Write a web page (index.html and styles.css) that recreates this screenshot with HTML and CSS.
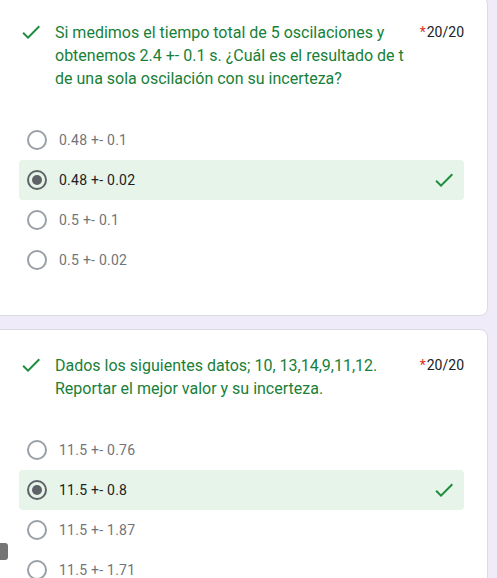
FILE: index.html
```html
<!DOCTYPE html>
<html lang="es">
<head>
<meta charset="utf-8">
<title>Cuestionario</title>
<link rel="stylesheet" href="styles.css">
</head>
<body>
<main class="page">
  <section class="card card-first">
    <div class="q-head">
      <svg class="q-check" viewBox="0 0 24 24" width="24" height="24"><path d="M9 16.17L4.83 12l-1.42 1.41L9 19 21 7l-1.41-1.41z"/></svg>
      <div class="q-title">Si medimos el tiempo total de 5 oscilaciones y obtenemos 2.4 +- 0.1 s. ¿Cuál es el resultado de t de una sola oscilación con su incerteza?</div>
      <div class="q-score"><span class="req">*</span>20/20</div>
    </div>
    <div class="options">
      <div class="opt"><span class="radio"></span><span class="opt-text">0.48 +- 0.1</span></div>
      <div class="opt opt-correct"><span class="radio radio-on"></span><span class="opt-text">0.48 +- 0.02</span>
        <svg class="opt-check" viewBox="0 0 24 24" width="24" height="24"><path d="M9 16.17L4.83 12l-1.42 1.41L9 19 21 7l-1.41-1.41z"/></svg></div>
      <div class="opt"><span class="radio"></span><span class="opt-text">0.5 +- 0.1</span></div>
      <div class="opt"><span class="radio"></span><span class="opt-text">0.5 +- 0.02</span></div>
    </div>
  </section>
  <section class="card">
    <div class="q-head">
      <svg class="q-check" viewBox="0 0 24 24" width="24" height="24"><path d="M9 16.17L4.83 12l-1.42 1.41L9 19 21 7l-1.41-1.41z"/></svg>
      <div class="q-title">Dados los siguientes datos; 10, 13,14,9,11,12. Reportar el mejor valor y su incerteza.</div>
      <div class="q-score"><span class="req">*</span>20/20</div>
    </div>
    <div class="options">
      <div class="opt"><span class="radio"></span><span class="opt-text">11.5 +- 0.76</span></div>
      <div class="opt opt-correct"><span class="radio radio-on"></span><span class="opt-text">11.5 +- 0.8</span>
        <svg class="opt-check" viewBox="0 0 24 24" width="24" height="24"><path d="M9 16.17L4.83 12l-1.42 1.41L9 19 21 7l-1.41-1.41z"/></svg></div>
      <div class="opt"><span class="radio"></span><span class="opt-text">11.5 +- 1.87</span></div>
      <div class="opt"><span class="radio"></span><span class="opt-text">11.5 +- 1.71</span></div>
    </div>
  </section>
</main>
<div class="side-tab"></div>
</body>
</html>
```
FILE: styles.css
```css
html, body {
  margin: 0;
  padding: 0;
  background: #f0ebf8;
  font-family: Roboto, "Liberation Sans", Arial, sans-serif;
  overflow: hidden;
}
.page {
  display: flex;
  flex-direction: column;
  gap: 13px;
}
.card {
  background: #fff;
  border: 1px solid #dadce0;
  border-radius: 8px;
  margin: 0 9px 0 -10px;
  padding: 24px 23px 35px 28px;
}
.card-first {
  margin-top: -4px;
}
.q-head {
  display: flex;
  align-items: flex-start;
}
.q-check {
  flex: none;
  fill: #1e8e3e;
  margin-top: -1px;
}
.q-title {
  flex: 1;
  margin-left: 12px;
  margin-right: 6px;
  font-size: 16px;
  line-height: 23px;
  color: #188038;
}
.q-score {
  flex: none;
  font-size: 14px;
  line-height: 23px;
  color: #202124;
}
.req {
  color: #d93025;
  margin-right: 1px;
}
.options {
  margin-top: 30px;
  display: flex;
  flex-direction: column;
}
.opt {
  display: flex;
  align-items: center;
  height: 40px;
  padding: 0 8px;
  border-radius: 4px;
}
.opt-correct {
  background: #e6f4ea;
}
.radio {
  flex: none;
  width: 16px;
  height: 16px;
  border: 2px solid #9aa0a6;
  border-radius: 50%;
  display: flex;
  align-items: center;
  justify-content: center;
}
.radio-on {
  border-color: #5f6368;
}
.radio-on::after {
  content: "";
  width: 10px;
  height: 10px;
  border-radius: 50%;
  background: #5f6368;
}
.opt-text {
  flex: 1;
  margin-left: 12px;
  font-size: 14px;
  letter-spacing: 0.25px;
  color: #70757a;
}
.opt-correct .opt-text {
  color: #202124;
}
.opt-check {
  flex: none;
  fill: #1e8e3e;
}
.side-tab {
  position: fixed;
  left: 0;
  top: 543px;
  width: 8px;
  height: 17px;
  background: #757575;
  border-radius: 0 3px 3px 0;
}
```
